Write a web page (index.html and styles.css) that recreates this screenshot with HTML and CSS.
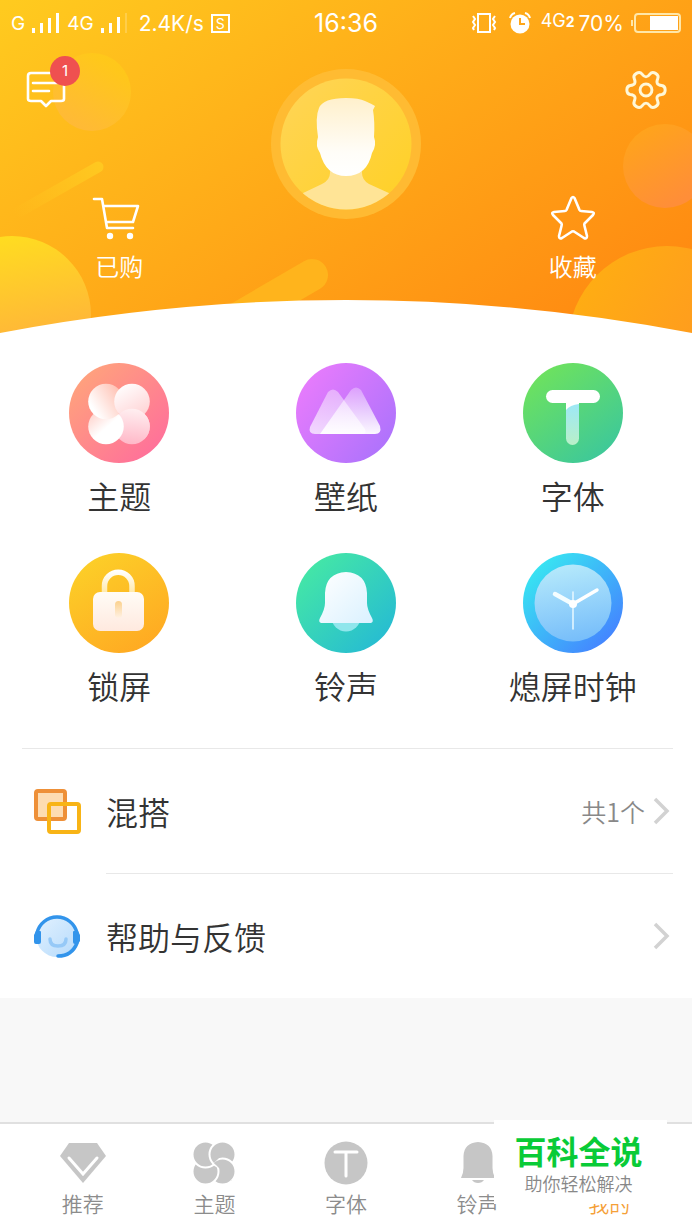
FILE: index.html
```html
<!DOCTYPE html>
<html lang="zh-CN">
    <head>
        <meta charset="utf-8">
        <meta name="viewport" content="width=device-width, initial-scale=1">
        <title>我的</title>
        <link rel="stylesheet" href="styles.css">
    </head>
    <body>
        <header>
            <svg class="decor" viewBox="0 0 692 334" preserveAspectRatio="none" aria-hidden="true">
                <defs>
                    <linearGradient id="d1" x1="0.4" y1="0" x2="0.6" y2="1"><stop offset="0" stop-color="#ffdd20"/><stop offset="1" stop-color="#ffa245"/></linearGradient>
                    <linearGradient id="d2" x1="0.8" y1="0.2" x2="0.3" y2="1"><stop offset="0" stop-color="#ffcb1a" stop-opacity="0.7"/><stop offset="1" stop-color="#ffb844" stop-opacity="0.7"/></linearGradient>
                    <linearGradient id="d3" x1="0.2" y1="0" x2="0.7" y2="0.9"><stop offset="0" stop-color="#ffa51a"/><stop offset="1" stop-color="#ff8e38"/></linearGradient>
                    <linearGradient id="d4" x1="0" y1="0" x2="1" y2="0.6"><stop offset="0" stop-color="#ffb110"/><stop offset="1" stop-color="#ff9324"/></linearGradient>
                    <linearGradient id="d5" gradientUnits="userSpaceOnUse" x1="100" y1="165" x2="15" y2="215"><stop offset="0" stop-color="#ffc820"/><stop offset="1" stop-color="#ffc820" stop-opacity="0"/></linearGradient>
                </defs>
                <circle cx="92" cy="92" r="39" fill="url(#d2)"/>
                <circle cx="12" cy="315" r="79" fill="url(#d1)"/>
                <circle cx="665" cy="166" r="42" fill="url(#d3)"/>
                <circle cx="667" cy="345" r="99" fill="url(#d4)"/>
                <path d="M98 167L10 217" stroke="url(#d5)" stroke-width="11" stroke-linecap="round"/>
                <path d="M312 275L240 317" stroke="#ffb41c" stroke-width="32" stroke-linecap="round"/>
                <path d="M0 333Q346 267 692 333V335H0Z" fill="#fff"/>
            </svg>
            <div class="status">
                <div class="status-left">
                    <span>G</span>
                    <svg width="28" height="20" viewBox="0 0 28 20" fill="#fff"><path d="M0 15h3v5H0zM8 10h3v10H8zM16 5h3v15h-3zM24 0h3v20h-3z"/></svg>
                    <span>4G</span>
                    <svg width="28" height="20" viewBox="0 0 28 20" fill="#fff"><path d="M0 15h3v5H0zM8 10h3v10H8zM16 4h3v16h-3z"/><path d="M24 0h2v20h-2z" opacity="0.2"/></svg>
                    <span class="speed">2.4K/s</span>
                    <span class="box">S</span>
                </div>
                <time>16:36</time>
                <div class="status-right">
                    <svg width="24" height="20" viewBox="0 0 24 20" fill="none" stroke="#fff" stroke-width="2"><path d="M6 1h12v18H6zM1 3l2 3-2 3 2 3-2 3 1 2M23 3l-2 3 2 3-2 3 2 3-1 2"/></svg>
                    <svg width="22" height="22" viewBox="0 0 22 22" fill="none"><circle cx="11" cy="12" r="9.500" fill="#fff"/><path d="M1 6a7 7 0 0 1 5-5M21 6a7 7 0 0 0-5-5" stroke="#fff" stroke-width="2"/><path d="M11 6v6h5" stroke="#ffa61a" stroke-width="2"/></svg>
                    <span class="net">4G<b>2</b></span>
                    <span class="percent">70%</span>
                    <svg width="50" height="20" viewBox="0 0 50 20"><rect x="4" y="1" width="45" height="18" rx="3" fill="none" stroke="#ffe7a8" stroke-width="2"/><path d="M0 7h2v6H0z" fill="#ffe7a8"/><path d="M19 3h28v14H19z" fill="#fff"/></svg>
                </div>
            </div>
            <div class="profile">
                <div class="side">
                    <button class="message" aria-label="消息">
                        <svg width="46" height="44" viewBox="0 0 46 44" fill="none" stroke="#fff" stroke-linecap="round" stroke-linejoin="round"><path d="M7 4h30q3 0 3 3v23q0 2-3 2H27l-5 5-5-5H7q-3 0-3-2V7q0-3 3-3zM9 14h24M9 22h16" stroke-width="2.600"/></svg>
                        <span class="badge">1</span>
                    </button>
                    <a class="shortcut" href="#">
                        <svg width="48" height="48" viewBox="0 0 48 48" fill="none" stroke="#fff" stroke-width="2.600" stroke-linecap="round" stroke-linejoin="round"><path d="M-1 5h8l5 29h26M9 12h34l-5 16H11"/><g fill="#fff" stroke="none"><circle cx="15" cy="42" r="3.200"/><circle cx="35" cy="42" r="3.200"/></g></svg>
                        <span>已购</span>
                    </a>
                </div>
                <a class="avatar" href="#" aria-label="头像">
                    <svg width="150" height="150" viewBox="0 0 150 150">
                        <defs>
                            <linearGradient id="a1" x1="0" y1="0" x2="1" y2="1"><stop offset="0" stop-color="#ffd558"/><stop offset="1" stop-color="#ffd024"/></linearGradient>
                            <linearGradient id="a2" x1="0" y1="0" x2="0" y2="1"><stop offset="0" stop-color="#fff0cc"/><stop offset="0.7" stop-color="#fffdf8"/><stop offset="1" stop-color="#fff"/></linearGradient>
                            <clipPath id="ac"><circle cx="75" cy="75" r="65.500"/></clipPath>
                        </defs>
                        <circle cx="75" cy="75" r="75" fill="#ffbd35" opacity="0.9"/>
                        <circle cx="75" cy="75" r="65.500" fill="url(#a1)"/>
                        <path clip-path="url(#ac)" d="M59 90V104Q59 111 51 115L30 125V150H120V125L98 115Q91 111 91 104V90Z" fill="#ffe496"/>
                        <path d="M47 68Q44 48 48 39Q52 29 75 29Q88 29 94 32Q101 35 104 37Q103 39 102 41Q104 53 103 68Q106 76 101 84Q96 107 75 107Q55 107 49 84Q44 77 47 68Z" fill="url(#a2)"/>
                    </svg>
                </a>
                <div class="side">
                    <button class="settings" aria-label="设置">
                        <svg width="42" height="42" viewBox="-23 -23 46 46" fill="none" stroke="#fff8d8" stroke-width="3.200"><path d="M21 0Q21 4.500 17.200 5Q13.400 5.400 12.400 7.200Q11.400 8.900 12.900 12.400Q14.400 15.900 10.500 18.200Q6.600 20.400 4.300 17.400Q2 14.400 0 14.400Q-2 14.400-4.300 17.400Q-6.600 20.400-10.500 18.200Q-14.400 15.900-12.900 12.400Q-11.400 8.900-12.400 7.200Q-13.400 5.400-17.200 5Q-21 4.500-21 0Q-21-4.500-17.200-5Q-13.400-5.400-12.400-7.200Q-11.400-8.900-12.900-12.400Q-14.400-15.900-10.500-18.200Q-6.600-20.400-4.300-17.400Q-2-14.400 0-14.400Q2-14.400 4.300-17.400Q6.600-20.400 10.500-18.200Q14.400-15.900 12.900-12.400Q11.400-8.900 12.400-7.200Q13.400-5.400 17.200-5Q21-4.500 21 0Z"/><circle r="6.500"/></svg>
                    </button>
                    <a class="shortcut" href="#">
                        <svg width="48" height="48" viewBox="0 0 48 48" fill="none" stroke="#fff" stroke-width="2.600" stroke-linejoin="round"><path d="M22.500 4Q24 2 25.500 4L30.500 16Q31 17 32 17L43 18Q46 18.500 44 21L35.500 29.500Q35 30.500 35.500 32L38 42Q38 45.500 35 44L25 37.500Q24 37 23 37.500L13 44Q10 45.500 10 42L12.500 32Q13 30.500 12.500 29.500L4 21Q2 18.500 5 18L16 17Q17 17 17.500 16Z"/></svg>
                        <span>收藏</span>
                    </a>
                </div>
            </div>
        </header>
        <main>
            <nav class="categories">
                <a href="#">
                    <svg width="100" height="100" viewBox="0 0 100 100">
                        <defs>
                            <linearGradient id="c1" x1="0.1" y1="0.1" x2="0.9" y2="0.9"><stop offset="0" stop-color="#ffa37c"/><stop offset="1" stop-color="#ff6f9b"/></linearGradient>
                            <linearGradient id="p1" x1="1" y1="0.3" x2="0.2" y2="0.8"><stop offset="0" stop-color="#ffc0b2"/><stop offset="1" stop-color="#fff"/></linearGradient>
                            <linearGradient id="p2" x1="0.8" y1="1" x2="0.2" y2="0"><stop offset="0" stop-color="#ffd0d2"/><stop offset="1" stop-color="#fff"/></linearGradient>
                            <linearGradient id="p3" x1="0" y1="0" x2="0.6" y2="0.7"><stop offset="0" stop-color="#ffc8c0"/><stop offset="0.8" stop-color="#fff"/></linearGradient>
                            <linearGradient id="p4" x1="0.3" y1="1" x2="0.4" y2="0"><stop offset="0" stop-color="#ffb7c7"/><stop offset="1" stop-color="#ffeef0"/></linearGradient>
                            <clipPath id="pc"><path d="M50 51L100 101V1Z"/></clipPath>
                        </defs>
                        <circle cx="50" cy="50" r="50" fill="url(#c1)"/>
                        <circle cx="63" cy="63.500" r="17.800" fill="url(#p4)"/>
                        <circle cx="37" cy="63.500" r="17.800" fill="url(#p3)"/>
                        <circle cx="37" cy="38.500" r="17.800" fill="url(#p1)"/>
                        <circle cx="63" cy="38.500" r="17.800" fill="url(#p2)"/>
                        <circle cx="63" cy="63.500" r="17.800" fill="url(#p4)" clip-path="url(#pc)"/>
                    </svg>
                    <span>主题</span>
                </a>
                <a href="#">
                    <svg width="100" height="100" viewBox="0 0 100 100">
                        <defs>
                            <linearGradient id="c2" x1="0.1" y1="0.2" x2="0.9" y2="0.8"><stop offset="0" stop-color="#e57bfc"/><stop offset="1" stop-color="#b073fc"/></linearGradient>
                            <linearGradient id="m1" x1="0.5" y1="0" x2="0.4" y2="1"><stop offset="0" stop-color="#fff" stop-opacity="0.4"/><stop offset="1" stop-color="#fff" stop-opacity="0.7"/></linearGradient>
                            <linearGradient id="m2" x1="0.5" y1="0" x2="0.5" y2="1"><stop offset="0" stop-color="#fff" stop-opacity="0.3"/><stop offset="1" stop-color="#fff" stop-opacity="0.95"/></linearGradient>
                        </defs>
                        <circle cx="50" cy="50" r="50" fill="url(#c2)"/>
                        <path d="M32 29Q37 24 42 29L69 66Q71 71 66 71H19Q12 71 14 64Z" fill="url(#m1)"/>
                        <path d="M55 27Q60 22 65 27L84 63Q86 71 79 71H24Z" fill="url(#m2)"/>
                    </svg>
                    <span>壁纸</span>
                </a>
                <a href="#">
                    <svg width="100" height="100" viewBox="0 0 100 100">
                        <defs>
                            <linearGradient id="c3" x1="0.2" y1="0.1" x2="0.8" y2="0.9"><stop offset="0" stop-color="#6ce160"/><stop offset="1" stop-color="#3fc998"/></linearGradient>
                            <linearGradient id="t1" x1="0" y1="0" x2="0" y2="1"><stop offset="0.2" stop-color="#9ee8f5"/><stop offset="1" stop-color="#b9f0c8"/></linearGradient>
                        </defs>
                        <circle cx="50" cy="50" r="50" fill="url(#c3)"/>
                        <rect x="43" y="32" width="13" height="50" rx="6.500" fill="url(#t1)"/>
                        <path d="M43 38h13v3Q47 42 43 47z" fill="#fff"/>
                        <rect x="23" y="27" width="54" height="13" rx="6.500" fill="#fff"/>
                    </svg>
                    <span>字体</span>
                </a>
                <a href="#">
                    <svg width="100" height="100" viewBox="0 0 100 100">
                        <defs>
                            <linearGradient id="c4" x1="0.2" y1="0" x2="0.8" y2="1"><stop offset="0" stop-color="#fcd028"/><stop offset="1" stop-color="#ffa822"/></linearGradient>
                            <linearGradient id="l1" x1="0" y1="0" x2="0" y2="1"><stop offset="0" stop-color="#fffcf6"/><stop offset="1" stop-color="#ffe9df"/></linearGradient>
                            <linearGradient id="l2" x1="0" y1="0" x2="0" y2="1"><stop offset="0" stop-color="#fbd18d"/><stop offset="1" stop-color="#fff1e4"/></linearGradient>
                            <linearGradient id="l3" gradientUnits="userSpaceOnUse" x1="0" y1="18" x2="0" y2="40"><stop offset="0" stop-color="#fff"/><stop offset="1" stop-color="#ffe9a8"/></linearGradient>
                        </defs>
                        <circle cx="50" cy="50" r="50" fill="url(#c4)"/>
                        <path d="M35.500 40V33A13.700 13.700 0 0 1 63 33V40" fill="none" stroke="url(#l3)" stroke-width="5.500"/>
                        <rect x="24" y="39" width="51" height="39" rx="7" fill="url(#l1)"/>
                        <rect x="46" y="48" width="7" height="17" rx="3.500" fill="url(#l2)"/>
                    </svg>
                    <span>锁屏</span>
                </a>
                <a href="#">
                    <svg width="100" height="100" viewBox="0 0 100 100">
                        <defs>
                            <linearGradient id="c5" x1="0.2" y1="0.1" x2="0.9" y2="0.8"><stop offset="0" stop-color="#43e5a8"/><stop offset="1" stop-color="#28bed0"/></linearGradient>
                            <linearGradient id="b1" x1="0" y1="0" x2="1" y2="1"><stop offset="0" stop-color="#fff"/><stop offset="1" stop-color="#daf1ff"/></linearGradient>
                        </defs>
                        <circle cx="50" cy="50" r="50" fill="url(#c5)"/>
                        <circle cx="50" cy="64" r="14.500" fill="#90e6ec"/>
                        <path d="M50 19Q70 20 71 40V50Q71 56 76 65Q78 69 75 70H25Q22 69 24 65Q29 56 29 50V40Q30 20 50 19Z" fill="url(#b1)"/>
                    </svg>
                    <span>铃声</span>
                </a>
                <a href="#">
                    <svg width="100" height="100" viewBox="0 0 100 100" stroke-linecap="round">
                        <defs>
                            <linearGradient id="c6" x1="0.1" y1="0.2" x2="0.8" y2="0.9"><stop offset="0" stop-color="#38e2f2"/><stop offset="1" stop-color="#4487ff"/></linearGradient>
                            <linearGradient id="k1" x1="0.4" y1="0" x2="0.6" y2="1"><stop offset="0" stop-color="#b5e9fb"/><stop offset="1" stop-color="#76bdfa"/></linearGradient>
                        </defs>
                        <circle cx="50" cy="50" r="50" fill="url(#c6)"/>
                        <circle cx="50" cy="50" r="38.500" fill="url(#k1)"/>
                        <path d="M50 39V76" stroke="#e4f7ff" stroke-width="1.600"/>
                        <path d="M50 51L74 37" stroke="#fff" stroke-width="3.500"/>
                        <path d="M50 51L32 41" stroke="#f4fdff" stroke-width="4.500"/>
                        <circle cx="50" cy="51" r="4" fill="#fff"/>
                    </svg>
                    <span>熄屏时钟</span>
                </a>
            </nav>
            <ul class="list">
                <li>
                    <a href="#">
                        <svg width="48" height="48" viewBox="0 0 48 48" fill="none" stroke-width="4" stroke-linejoin="round"><rect x="3" y="4" width="29" height="28" rx="2" fill="#fddcb2" stroke="#ee9038"/><rect x="16" y="17" width="30" height="28" rx="2" stroke="#f8b416"/></svg>
                        <span class="name">混搭</span>
                        <span class="count">共1个</span>
                        <svg width="20" height="28" viewBox="0 0 20 28" fill="none" stroke="#d2d2d2" stroke-width="3.500"><path d="M2 2l12 12L2 26"/></svg>
                    </a>
                </li>
                <li>
                    <a href="#">
                        <svg width="48" height="48" viewBox="0 0 48 48" fill="none" stroke-linecap="round">
                            <defs><linearGradient id="h1" x1="0" y1="0" x2="1" y2="1"><stop offset="0" stop-color="#e3f2ff"/><stop offset="1" stop-color="#b5dafb"/></linearGradient></defs>
                            <circle cx="24" cy="24" r="21" fill="url(#h1)"/>
                            <path d="M4 21a20.500 20.500 0 0 1 40 0M44 31q-5 13-19 13" stroke="#3294eb" stroke-width="3.500"/>
                            <path d="M3 19h4q1 0 1 1v10q0 2-2 2H3q-2 0-2-2v-7zM45 19h-4q-1 0-1 1v10q0 2 2 2h3l2-3v-6z" fill="#3294eb"/>
                            <path d="M17 27q0 7 8 7t8-7" stroke="#96c9f7" stroke-width="3.500"/>
                        </svg>
                        <span class="name">帮助与反馈</span>
                        <svg width="20" height="28" viewBox="0 0 20 28" fill="none" stroke="#d2d2d2" stroke-width="3.500"><path d="M2 2l12 12L2 26"/></svg>
                    </a>
                </li>
            </ul>
        </main>
        <footer>
            <nav class="tabs">
                <a href="#">
                    <svg width="48" height="48" viewBox="0 0 48 48"><path d="M10 4h28l9 13-23 27L1 17z" fill="#c6c6c6"/><path d="M10 19l14 16 14-16" fill="none" stroke="#fff" stroke-width="3" stroke-linecap="round"/></svg>
                    <span>推荐</span>
                </a>
                <a href="#">
                    <svg width="48" height="48" viewBox="0 0 48 48" fill="#c6c6c6" stroke="#fff" stroke-width="2">
                        <defs><clipPath id="gc"><path d="M24 24L48 48V0Z"/></clipPath></defs>
                        <circle cx="32.500" cy="32.500" r="13"/>
                        <circle cx="15.500" cy="32.500" r="13"/>
                        <circle cx="15.500" cy="15.500" r="13"/>
                        <circle cx="32.500" cy="15.500" r="13"/>
                        <circle cx="32.500" cy="32.500" r="13" clip-path="url(#gc)"/>
                    </svg>
                    <span>主题</span>
                </a>
                <a href="#">
                    <svg width="48" height="48" viewBox="0 0 48 48"><circle cx="24" cy="24" r="21.500" fill="#c6c6c6"/><path d="M13 13h22M24 13v24" stroke="#fff" stroke-width="3" stroke-linecap="round"/></svg>
                    <span>字体</span>
                </a>
                <a href="#">
                    <svg width="48" height="48" viewBox="0 0 48 48" fill="#c6c6c6"><path d="M24 3Q38 4 38.500 17V29Q38.500 34 41 39H7Q9.500 34 9.500 29V17Q10 4 24 3ZM18 41H30Q28 44 24 44T18 41Z"/></svg>
                    <span>铃声</span>
                </a>
                <a class="active" href="#">
                    <svg width="48" height="48" viewBox="0 0 48 48" fill="#f5a623"><circle cx="24" cy="15" r="10"/><path d="M6 42q3-14 18-14t18 14z"/></svg>
                    <span>我的</span>
                </a>
            </nav>
            <div class="watermark">
                <strong>百科全说</strong>
                <small>助你轻松解决</small>
            </div>
        </footer>
    </body>
</html>
```

FILE: styles.css
```css
* {
    box-sizing: border-box;
}
body {
    display: flex;
    flex-direction: column;
    min-height: 100vh;
    margin: 0;
    background: #f8f8f8;
    color: #333;
    font-family: "Noto Sans CJK SC", sans-serif;
    font-weight: 350;
}
a {
    color: inherit;
    text-decoration: none;
}
button {
    padding: 0;
    border: 0;
    background: none;
    font: inherit;
    color: inherit;
}
svg {
    display: block;
    flex: none;
    overflow: visible;
}

/* header */
header {
    position: relative;
    overflow: hidden;
    padding-bottom: 50px;
    background: linear-gradient(146deg, #ffcb1f, #ff8410);
    color: #fff;
}
.decor {
    position: absolute;
    top: 0;
    left: 0;
    width: 100%;
    height: 100%;
}
.status {
    position: relative;
    display: grid;
    grid-template-columns: 1fr auto 1fr;
    align-items: center;
    height: 46px;
    padding: 0 11px;
    font-family: Inter, sans-serif;
    font-size: 19px;
    font-weight: 400;
}
.status-left,
.status-right {
    display: flex;
    align-items: center;
    gap: 7px;
}
.status-right {
    justify-content: flex-end;
}
.status time {
    font-size: 25px;
}
.speed,
.percent {
    font-size: 21px;
}
.speed {
    margin-left: 3px;
}
.box {
    width: 19px;
    height: 19px;
    border: 2px solid #fff;
    font-size: 14px;
    line-height: 15px;
    text-align: center;
}
.net {
    margin: 0 -3px 6px 3px;
    font-size: 18px;
}
.net b {
    font-size: 14px;
}
.status-right svg:nth-child(2) {
    margin-left: 6px;
}
.profile {
    position: relative;
    display: grid;
    grid-template-columns: repeat(3, 1fr);
    padding: 23px 6px 0;
}
.side {
    display: flex;
    flex-direction: column;
    justify-content: space-between;
}
.message {
    position: relative;
    align-self: flex-start;
    margin-left: 18px;
}
.settings {
    align-self: flex-end;
    margin-right: 19px;
}
.badge {
    position: absolute;
    top: -13px;
    right: -10px;
    width: 30px;
    height: 30px;
    border-radius: 50%;
    background: #ef5050;
    font: 15px/30px Inter, sans-serif;
}
.shortcut {
    display: flex;
    flex-direction: column;
    align-items: center;
    gap: 6px;
    font-size: 24px;
    line-height: 36px;
}
.avatar {
    justify-self: center;
    height: 215px;
}

/* categories */
main {
    background: #fff;
}
.categories {
    display: grid;
    grid-template-columns: repeat(3, 1fr);
    row-gap: 34px;
    padding: 29px 6px 39px;
}
.categories a {
    display: flex;
    flex-direction: column;
    align-items: center;
    gap: 8px;
    font-size: 32px;
    line-height: 48px;
}

/* list */
.list {
    margin: 0 19px 0 22px;
    padding: 0;
    list-style: none;
}
.list li {
    border-top: 1px solid #e8e8e8;
}
.list li + li {
    margin-left: 84px;
}
.list li + li a {
    margin-left: -84px;
}
.list a {
    display: flex;
    align-items: center;
    height: 124px;
    padding-left: 11px;
}
.name {
    margin: 0 auto 0 25px;
    font-size: 32px;
}
.count {
    margin-right: 8px;
    color: #888;
    font-size: 25px;
}

/* bottom bar */
footer {
    position: relative;
    margin-top: auto;
    border-top: 2px solid #e0e0e0;
    background: #fff;
}
.tabs {
    display: grid;
    grid-template-columns: repeat(5, 1fr);
    padding: 15px 17px 11px;
    color: #8c8c8c;
    font-size: 21px;
    line-height: 32px;
}
.tabs a {
    display: flex;
    flex-direction: column;
    align-items: center;
}
.tabs .active {
    color: #f5a038;
}
.watermark {
    position: absolute;
    right: 25px;
    bottom: 26px;
    display: flex;
    flex-direction: column;
    align-items: center;
    width: 173px;
    padding: 10px 4px 8px 0;
    background: #fff;
}
.watermark strong {
    color: #09cb37;
    font-size: 32px;
    font-weight: 700;
    line-height: 40px;
}
.watermark small {
    color: #888;
    font-size: 18px;
    line-height: 26px;
}
```
